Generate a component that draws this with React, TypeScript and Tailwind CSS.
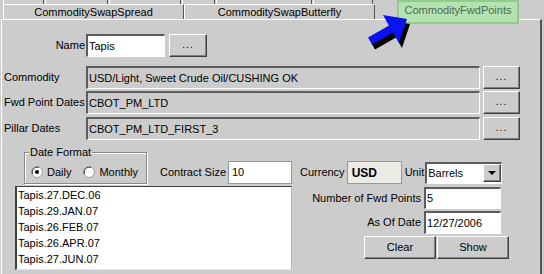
import React from 'react';

// raised / sunken bevels, windows classic look
const raised =
  'border-t border-l border-t-white border-l-white border-b border-r border-b-[#404040] border-r-[#404040] shadow-[inset_-1px_-1px_0_#808080]';
const sunken =
  'border-t-2 border-l-2 border-t-[#5c5c5c] border-l-[#5c5c5c] border-b border-r border-b-white border-r-white';

const Dots = ({ className }: { className: string }) => (
  <div className={`${raised} ${className} flex items-center justify-center pb-[3px] text-[10px] tracking-[1px]`}>...</div>
);

const Row = ({ label, value }: { label: string; value: string }) => (
  <div className="flex h-[23px]">
    <div className="w-[84px] pl-[2px] flex items-center">{label}</div>
    <div className={`${sunken} w-[394px] h-[23px] flex items-center pl-[1px]`}>{value}</div>
    <Dots className="ml-[3px] w-[37px] h-[23px]" />
  </div>
);

const Radio = ({ checked }: { checked?: boolean }) => (
  <svg width="12" height="12" viewBox="0 0 12 12">
    <circle cx="6" cy="6" r="5.5" fill="#fff" stroke="#9a9a9a" />
    <path d="M1.5 8 A5 5 0 0 1 8 1.5" fill="none" stroke="#404040" strokeWidth="1" />
    {checked && <circle cx="6" cy="6" r="2" fill="#000" />}
  </svg>
);

const rows = [
  'Tapis.27.DEC.06',
  'Tapis.29.JAN.07',
  'Tapis.26.FEB.07',
  'Tapis.26.APR.07',
  'Tapis.27.JUN.07',
];

const stubs = [41, 63, 72, 33, 96, 60];

export default function App() {
  return (
    <div className="relative w-[544px] h-[274px] overflow-hidden bg-[#cccccc] text-[11px] text-black font-['Liberation_Sans',Arial,sans-serif]">
      {/* //upper tab row, cut off */}
      <div className="flex h-[4px] pl-[3px]">
        {stubs.map((w, i) => (
          <div
            key={i}
            className="border-l border-l-white border-r border-r-[#555] mr-[1px]"
            style={{ width: w }}
          ></div>
        ))}
      </div>

      {/* //tab row */}
      <div className="flex h-[15px] pl-[3px]">
        <div className="w-[181px] border-t border-l border-t-white border-l-white border-r border-r-[#555] flex items-center justify-center">
          CommoditySwapSpread
        </div>
        <div className="w-[191px] border-t border-l border-t-white border-l-white border-r border-r-[#555] flex items-center justify-center">
          CommoditySwapButterfly
        </div>
      </div>

      {/* //panel */}
      <div className="ml-[1px] w-[541px] h-[255px] pt-[14px] border-t border-l border-t-white border-l-white border-r-2 border-r-[#555]">
        {/* //Name */}
        <div className="flex h-[23px]">
          <div className="w-[84px] pr-[1px] flex items-center justify-end">Name</div>
          <div className={`${sunken} w-[79px] bg-white flex items-center pl-[1px]`}>Tapis</div>
          <Dots className="ml-[4px] w-[38px] h-[23px]" />
        </div>

        <div className="flex flex-col gap-[2px] mt-[9px]">
          <Row label="Commodity" value="USD/Light, Sweet Crude Oil/CUSHING OK" />
          <Row label="Fwd Point Dates" value="CBOT_PM_LTD" />
          <div className="mt-[1px]">
            <Row label="Pillar Dates" value="CBOT_PM_LTD_FIRST_3" />
          </div>
        </div>

        {/* //lower part */}
        <div className="flex mt-[10px]">
          <div className="ml-[13px] w-[277px]">
            <div className="flex items-end h-[34px]">
              <div className="relative ml-[9px] w-[123px] h-[32px] border border-[#8a8a8a] shadow-[inset_1px_1px_0_#fff,1px_1px_0_#fff]">
                <div className="absolute left-[4px] -top-[8px] bg-[#cccccc] px-[1px] leading-[14px]">Date Format</div>
                <div className="flex items-center h-full pt-[8px] pl-[6px]">
                  <Radio checked />
                  <span className="ml-[4px]">Daily</span>
                  <span className="ml-[12px] flex items-center">
                    <Radio />
                  </span>
                  <span className="ml-[4px]">Monthly</span>
                </div>
              </div>
              <div className="flex-1 flex items-center justify-end">
                <span>Contract Size</span>
                <div className="ml-[2px] w-[64px] h-[23px] bg-white border border-[#7f9db9] flex items-center pl-[3px]">10</div>
              </div>
            </div>
            <div className="mt-[2px] h-[84px] bg-white border-t border-t-[#404040] border-l-2 border-l-[#404040] border-r border-r-[#a9b8c8] border-b border-b-[#e4e4e4] pl-[1px]">
              {rows.map((r) => (
                <div key={r} className="leading-[16px]">{r}</div>
              ))}
            </div>
          </div>

          <div className="ml-[8px] w-[209px] pt-[11px]">
            <div className="flex items-center h-[23px]">
              <span>Currency</span>
              <div className="ml-[2px] w-[55px] h-[23px] bg-[#ecebe6] border border-[#7f9db9] flex items-center pl-[4px] font-bold text-[12px]">USD</div>
              <span className="ml-[3px]">Unit</span>
              <div className={`${sunken} ml-[1px] w-[77px] h-[22px] bg-white flex items-center pl-[1px]`}>
                <span className="flex-1">Barrels</span>
                <div className={`${raised} w-[18px] h-[18px] bg-[#cccccc] flex items-center justify-center`}>
                  <svg width="8" height="4" viewBox="0 0 8 4">
                    <path d="M0 0 H8 L4 4 Z" fill="#000" />
                  </svg>
                </div>
              </div>
            </div>
            <div className="flex items-center justify-end pr-[8px] mt-[3px] h-[22px]">
              <span>Number of Fwd Points</span>
              <div className={`${sunken} ml-[3px] w-[77px] h-[22px] bg-white flex items-center pl-[1px]`}>5</div>
            </div>
            <div className="flex items-center justify-end pr-[8px] mt-[2px] h-[23px]">
              <span>As Of Date</span>
              <div className={`${sunken} ml-[3px] w-[77px] h-[23px] bg-white flex items-center pl-[1px]`}>12/27/2006</div>
            </div>
            <div className="flex justify-end mt-[2px]">
              <button className={`${raised} w-[72px] h-[23px] flex items-center justify-center`}>Clear</button>
              <button className={`${raised} ml-[1px] w-[72px] h-[23px] flex items-center justify-center`}>Show</button>
            </div>
          </div>
        </div>
      </div>

      {/* //selected tab */}
      <div className="absolute left-[397px] top-0 w-[122px] h-[24px] bg-[#b4e2b0] border-2 border-[#8fcc8b] text-[#4d6b50] flex items-center justify-center pb-[3px]">
        CommodityFwdPoints
      </div>

      {/* //arrow */}
      <svg className="absolute left-[360px] top-[10px]" width="60" height="45" viewBox="0 0 60 45">
        <polygon points="11,32.5 32,20.5 26,10 50,14 42,38 36,27.5 15,39.5" fill="#000" />
        <polygon points="8,27.5 29,15.5 23,5 47,9 39,33 33,22.5 12,34.5" fill="#0a14f0" />
      </svg>
    </div>
  );
}
